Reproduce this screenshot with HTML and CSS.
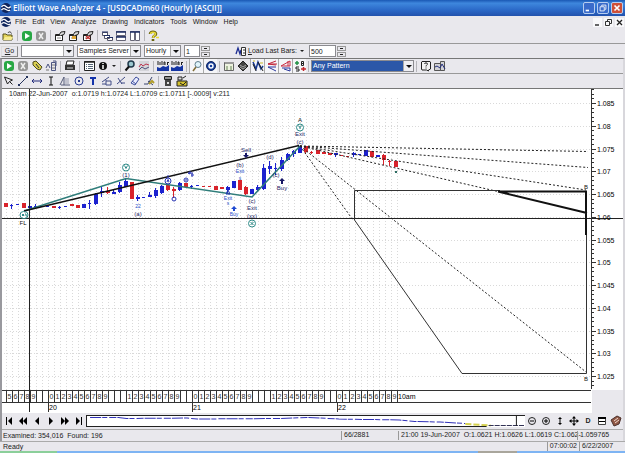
FILE: index.html
```html
<!DOCTYPE html>
<html lang="en">
<head>
<meta charset="utf-8">
<title>Elliott Wave Analyzer 4</title>
<link rel="stylesheet" href="styles.css">
</head>
<body>
<svg class="defs" aria-hidden="true">
  <symbol id="logo" viewBox="0 0 12 12"><circle cx="6" cy="6" r="5" fill="#10255c"/><path d="M1.5 5C3 3 4.500 3 6 4.500S9 6.500 10.800 4.500M1.500 8C3 6 4.500 6.500 6 7.500S9 9 10 8" stroke="#fff" stroke-width="1.300" fill="none"/></symbol>
  <symbol id="folder" viewBox="0 0 12 12"><path d="M1 10V4h3l1 1h5v5z" fill="#e4d45c" stroke="#55501c"/><path d="M6 3c1-2 3-1 3.500.5" stroke="#333" fill="none"/><path d="M3 7h8l-1.500 3H1z" fill="#f5eb91"/></symbol>
  <symbol id="go" viewBox="0 0 12 12"><rect x="1" y="1" width="10" height="10" rx="3" fill="#28a745"/><path d="M4 3l5 3-5 3z" fill="#fff"/></symbol>
  <symbol id="stop" viewBox="0 0 12 12"><rect x="1" y="1" width="10" height="10" rx="3" fill="#969696"/><path d="M4 3l4 6M8 3L4 9" stroke="#eee" stroke-width="1.500"/></symbol>
  <symbol id="prop" viewBox="0 0 12 12"><path d="M1.500 4.500h7v6h-7z" fill="#fff" stroke="#222"/><path d="M2 5h6" stroke="#222" stroke-width="2"/><path d="M5 5l2-3 4-.5-1 3-3 1" fill="#ddd" stroke="#222"/><path d="M3 8h4" stroke="#888"/></symbol>
  <symbol id="prop2" viewBox="0 0 12 12"><use href="#prop"/><path d="M4 6h4v3H4z" fill="#e0a83c"/></symbol>
  <symbol id="prop3" viewBox="0 0 12 12"><use href="#prop"/><path d="M4 6l4 3M8 6L4 9" stroke="#c33131" stroke-width="1.500"/></symbol>
  <symbol id="cascade" viewBox="0 0 12 12"><path d="M1.500 2.500h5v3h-5zM3.500 5.500h5v3h-5zM6.500 7.500h5v3h-5z" fill="#fff" stroke="#556"/><path d="M1 2h6M3 5.500h6M6 7.500h6" stroke="#1d2d63"/></symbol>
  <symbol id="tileh" viewBox="0 0 12 12"><path d="M1.500 1.500h9v4h-9zM1.500 6.500h9v4h-9z" fill="#fff" stroke="#667"/><path d="M1 2h10M1 7h10" stroke="#1d2d63" stroke-width="1.500"/></symbol>
  <symbol id="tilev" viewBox="0 0 12 12"><path d="M1.500 1.500h4v9h-4zM6.500 1.500h4v9h-4z" fill="#fff" stroke="#667"/><path d="M1 2h10" stroke="#1d2d63" stroke-width="1.500"/></symbol>
  <symbol id="help" viewBox="0 0 12 12"><path d="M2 4c0-3 6-3 6 0 0 2-3 1.500-3 4M5 9v2" stroke="#6a6410" stroke-width="2.600" fill="none"/><path d="M2.500 4c0-2.500 5-2.500 5 0 0 2-2.500 1.500-2.500 4M8 7.500h3" stroke="#eadb38" stroke-width="1.500" fill="none"/></symbol>
  <symbol id="tag" viewBox="0 0 12 12"><path d="M2 2l3-1 6 6-2 3-3-1-4-4z" fill="#d9cf52" stroke="#4e4a1b"/><path d="M5 4l3 4" stroke="#333"/></symbol>
  <symbol id="wavebox" viewBox="0 0 12 12"><path d="M1 8l2-4 2 4M6.500 2.500h4v8h-4zM8 1h3v5" fill="none" stroke="#4b5482"/><path d="M1 10h3M7 5h3M7 8h3" stroke="#777"/></symbol>
  <symbol id="print" viewBox="0 0 12 12"><path d="M3 1h7L9 5H2z" fill="#fff" stroke="#222"/><path d="M1 5h10v5H1z" fill="#333"/><path d="M3 8h6" stroke="#ddd"/></symbol>
  <symbol id="list" viewBox="0 0 12 12"><path d="M1.500 1.500h10v9h-10z" fill="#fff" stroke="#222"/><path d="M1 2h11" stroke="#222" stroke-width="1.500"/><path d="M3 4.500h1M3 6.500h1M3 8.500h1M5 4.500h5M5 6.500h5M5 8.500h5" stroke="#567"/></symbol>
  <symbol id="info" viewBox="0 0 12 12"><circle cx="6" cy="6" r="4" fill="#111"/><path d="M6 3v1M6 5v4" stroke="#fff" stroke-width="1.500"/></symbol>
  <symbol id="find" viewBox="0 0 12 12"><circle cx="7" cy="4" r="3" fill="#9bc7cf" stroke="#203a4c" stroke-width="1.500"/><path d="M5 6.500L1.500 10.500" stroke="#111" stroke-width="2"/></symbol>
  <symbol id="lens" viewBox="0 0 12 12"><circle cx="7" cy="4.500" r="3" fill="#dff3fa" stroke="#607d8d"/><path d="M5 7l-3 4" stroke="#806c36" stroke-width="1.500"/></symbol>
  <symbol id="osc" viewBox="0 0 12 12"><path d="M1 1h10v10H1z" fill="#d4d4d9"/><path d="M1 7l2-3 2 2 3-2 3 1" stroke="#bb3550" fill="none"/><path d="M1 10l3-3 3 2 4-2" stroke="#4d527a" fill="none"/></symbol>
  <symbol id="area" viewBox="0 0 12 12"><path d="M0 11V7l3 1 3-2 3 1 3-2v6z" fill="#1535a4"/><path d="M1 1v4M3 2v3M5 1v4M7 5V2h1v3M10.500 2v3M10 2.500h2" stroke="#222" fill="none"/></symbol>
  <symbol id="target" viewBox="0 0 12 12"><circle cx="6" cy="6" r="4.500" fill="#173d99" stroke="#132861"/><circle cx="6" cy="6" r="2" fill="#173d99" stroke="#fff" stroke-width="1.400"/></symbol>
  <symbol id="table" viewBox="0 0 12 12"><path d="M1.500 2.500h9v8h-9z" fill="#edf2df" stroke="#666"/><path d="M2 3h9" stroke="#999" stroke-width="2"/><path d="M3 7h2M7 7h2M3 9h2M7 9h2" stroke="#648257"/></symbol>
  <symbol id="stack" viewBox="0 0 12 12"><path d="M1 6l5-5 5 5-5 5z" fill="#444" stroke="#222"/><path d="M3 5l3 2 3-2M3 7l3 2 3-2" stroke="#a7a7a7" fill="none"/></symbol>
  <symbol id="waves" viewBox="0 0 12 12"><path d="M1 2l3 7 2-7 3 7 2-3" stroke="#17398f" stroke-width="1.500" fill="none"/><path d="M1 4l3 7M6 2l5 9" stroke="#222"/><path d="M1 1h2M8 3h3" stroke="#c9b82b"/></symbol>
  <symbol id="chan" viewBox="0 0 12 12"><path d="M10 1L2 4l8 1M2 4h9" stroke="#c2263b" fill="none"/><path d="M10 7H2l8 4" stroke="#28359c" fill="none"/></symbol>
  <symbol id="tri" viewBox="0 0 12 12"><path d="M10 1L1 6h9zM8 1v5" stroke="#c92b42" fill="none"/><path d="M2 8h8v3L4 9" stroke="#28359c" fill="none"/></symbol>
  <symbol id="bs" viewBox="0 0 12 12"><path d="M1 3h4M3 1v4" stroke="#219146" stroke-width="1.500"/><path d="M7.500 1.500h2v4h-2zM7 3.500h3M5 7H2v2h3v2H2" stroke="#222" fill="none"/><path d="M7 9h5M9.500 7v4" stroke="#c3262b" stroke-width="1.500"/></symbol>
  <symbol id="ask" viewBox="0 0 12 12"><path d="M2 1.500h8l.5.5v7l-2 1v1l-2-1H2L1.500 9V2z" fill="#f3f3f3" stroke="#222"/><path d="M4.500 4c0-1.500 3-1.500 3 0 0 1-1.500 1-1.500 2.500M6 7.500v1" stroke="#222" fill="none"/></symbol>
  <symbol id="exitbox" viewBox="0 0 12 12"><path d="M.5 3.500h6v7h-6zM6.500 1.500h4v9h-4z" fill="#d2d2d6" stroke="#555"/><path d="M1 7l2-1 3 2 2-4 3 5" stroke="#24307e" fill="none"/></symbol>
  <symbol id="pointer" viewBox="0 0 12 12"><path d="M1.500 2l8 3-3 1.500 3 3M1.500 2l3 7 2-2.500" fill="none" stroke="#222"/></symbol>
  <symbol id="line" viewBox="0 0 12 12"><path d="M2 10l8-8" stroke="#25335c"/><path d="M1 9h2v2H1zM9 1h2v2H9z" fill="#25335c"/></symbol>
  <symbol id="hline" viewBox="0 0 12 12"><path d="M1 6h10" stroke="#222b7b"/><path d="M3 4L1 6l2 2M9 4l2 2-2 2" stroke="#222b7b" fill="none"/></symbol>
  <symbol id="vline" viewBox="0 0 12 12"><path d="M6 2v8M4 2h4M4 10h4" stroke="#111"/></symbol>
  <symbol id="fib" viewBox="0 0 12 12"><path d="M1 10L5 2v8M2 10h9" stroke="#555b78" fill="none"/><path d="M6 4h4M6 6h4M6 8h4" stroke="#9a9db0"/></symbol>
  <symbol id="circ" viewBox="0 0 12 12"><circle cx="6" cy="6" r="4" fill="none" stroke="#273a91"/><path d="M5 6h2" stroke="#273a91" stroke-width="2"/></symbol>
  <symbol id="tee" viewBox="0 0 12 12"><path d="M3 3h6M6 3v7" stroke="#1434aa" stroke-width="2"/></symbol>
  <symbol id="fork" viewBox="0 0 12 12"><path d="M1 7l7-5M5 5v5h5V6H5M1 9h4" stroke="#414c86" fill="none"/></symbol>
  <symbol id="cross" viewBox="0 0 12 12"><path d="M2 9l8-7M3 3l4 6M6 8h4" stroke="#414c86" fill="none"/></symbol>
  <symbol id="eraser" viewBox="0 0 12 12"><path d="M2 8l5-6 3 2-4 6zM3 6l4 3" fill="#e9ecff" stroke="#3c4d9c"/></symbol>
  <symbol id="angle" viewBox="0 0 12 12"><path d="M1 9h4l4-7M5 6l5 4" stroke="#39446e" fill="none"/><path d="M6 9l3-3 2 2" stroke="#b19e2c" stroke-width="2" fill="none"/></symbol>
  <symbol id="trash" viewBox="0 0 12 12"><path d="M2.500 1.500h7v3h-7z" fill="#fff" stroke="#222"/><path d="M3 3h6" stroke="#222"/><path d="M3 5h6v6H3z" fill="#444"/><path d="M5 7h2v2H5z" fill="#ddd"/></symbol>
  <symbol id="colors" viewBox="0 0 12 12"><path d="M1 6h10v5H1z" fill="#d3c02d" stroke="#222"/><path d="M2 2h4v3H2zM7 3l3-2" stroke="#222" fill="#ddd"/><path d="M4 8l3 2 3-3" stroke="#222" fill="none"/></symbol>
  <symbol id="loadbars" viewBox="0 0 12 12"><path d="M1 9l2-6 2 6 1-4" stroke="#1b2b91" stroke-width="1.300" fill="none"/><path d="M6.500 2.500h4v8h-4z" fill="#fff" stroke="#333"/><path d="M8 5h2M8 8h2" stroke="#333"/></symbol>
</svg>

<header class="titlebar">
  <svg class="icon"><use href="#logo"/></svg>
  <h1>Elliott Wave Analyzer 4 - [USDCADm60 (Hourly) [ASCII]]</h1>
  <div class="winbtns">
    <button aria-label="Minimize"><svg viewBox="0 0 12 12"><path d="M2 8h4v2H2z" fill="#fff"/></svg></button>
    <button aria-label="Restore"><svg viewBox="0 0 12 12"><path d="M4.500 4V2.500h5v5H8M2.500 4.500h5v5h-5z" fill="none" stroke="#fff"/></svg></button>
    <button class="close" aria-label="Close"><svg viewBox="0 0 12 12"><path d="M3 3l6 6M9 3L3 9" stroke="#fff" stroke-width="2"/></svg></button>
  </div>
</header>

<nav class="menubar">
  <svg class="icon"><use href="#logo"/></svg>
  <button>File</button><button>Edit</button><button>View</button><button>Analyze</button><button>Drawing</button><button>Indicators</button><button>Tools</button><button>Window</button><button>Help</button>
  <div class="mdibtns">
    <button aria-label="Minimize chart"><svg viewBox="0 0 9 9"><path d="M2 7h4" stroke="#333" stroke-width="1.500"/></svg></button>
    <button aria-label="Restore chart"><svg viewBox="0 0 9 9"><path d="M3.500 3V1.500h4v4H6M1.500 3.500h4v4h-4z" fill="none" stroke="#333"/></svg></button>
    <button aria-label="Close chart"><svg viewBox="0 0 9 9"><path d="M2 2l5 5M7 2L2 7" stroke="#222" stroke-width="1.300"/></svg></button>
  </div>
</nav>

<div class="toolbar">
  <button aria-label="Open"><svg><use href="#folder"/></svg></button><i class="sep"></i>
  <button aria-label="Start"><svg><use href="#go"/></svg></button>
  <button aria-label="Stop"><svg><use href="#stop"/></svg></button><i class="sep"></i>
  <button aria-label="Properties"><svg><use href="#prop"/></svg></button>
  <button aria-label="Edit properties"><svg><use href="#prop2"/></svg></button>
  <button aria-label="Remove properties"><svg><use href="#prop3"/></svg></button><i class="sep"></i>
  <button aria-label="Cascade"><svg><use href="#cascade"/></svg></button>
  <button aria-label="Tile horizontally"><svg><use href="#tileh"/></svg></button>
  <button aria-label="Tile vertically"><svg><use href="#tilev"/></svg></button><i class="sep"></i>
  <button aria-label="Help"><svg><use href="#help"/></svg></button>
</div>

<div class="toolbar fields">
  <button class="gobtn"><u>G</u>o</button>
  <span class="combo w-symbol"><select aria-label="Symbol"><option></option></select></span>
  <span class="combo w-server"><select aria-label="Server"><option>Samples Server</option></select></span>
  <span class="combo w-period"><select aria-label="Period"><option>Hourly</option></select></span>
  <span class="spin"><input class="w-count" aria-label="Count" value="1"><span class="steps"><button aria-label="More"></button><button aria-label="Less"></button></span></span>
  <span class="load"><svg class="icon"><use href="#loadbars"/></svg><label for="bars"><u>L</u>oad Last Bars:</label><i class="caret"></i></span>
  <span class="spin"><input class="w-bars" id="bars" value="500"><span class="steps"><button aria-label="More bars"></button><button aria-label="Fewer bars"></button></span></span>
</div>

<main class="docwin">
  <div class="toolbar ruled">
    <button aria-label="Run"><svg><use href="#go"/></svg></button>
    <button aria-label="Halt"><svg><use href="#stop"/></svg></button>
    <button aria-label="Label"><svg><use href="#tag"/></svg></button>
    <button aria-label="Wave settings"><svg><use href="#wavebox"/></svg></button><i class="sep"></i>
    <button aria-label="Print"><svg><use href="#print"/></svg></button><i class="sep"></i>
    <button aria-label="List"><svg><use href="#list"/></svg></button>
    <button aria-label="Info"><svg><use href="#info"/></svg></button><i class="caret"></i><i class="sep"></i>
    <button aria-label="Find"><svg><use href="#find"/></svg></button>
    <button aria-label="Oscillator"><svg><use href="#osc"/></svg></button><i class="sep"></i>
    <button aria-label="Wave area"><svg><use href="#area"/></svg></button>
    <button aria-label="Wave area 2"><svg><use href="#area"/></svg></button><i class="sep"></i>
    <button class="on" aria-label="Zoom"><svg><use href="#lens"/></svg></button>
    <button class="on" aria-label="Target"><svg><use href="#target"/></svg></button><i class="sep"></i>
    <button aria-label="Table"><svg><use href="#table"/></svg></button>
    <button aria-label="Layers"><svg><use href="#stack"/></svg></button>
    <button class="on" aria-label="Waves"><svg><use href="#waves"/></svg></button>
    <button class="on" aria-label="Channels"><svg><use href="#chan"/></svg></button>
    <button class="on" aria-label="Wedges"><svg><use href="#tri"/></svg></button>
    <button class="on" aria-label="Buy and sell"><svg><use href="#bs"/></svg></button><i class="sep"></i>
    <span class="combo w-pattern"><select aria-label="Pattern"><option>Any Pattern</option></select></span><i class="sep"></i>
    <button aria-label="Ask"><svg><use href="#ask"/></svg></button>
    <button aria-label="Chart exit"><svg><use href="#exitbox"/></svg></button>
  </div>
  <div class="toolbar">
    <button aria-label="Pointer"><svg><use href="#pointer"/></svg></button>
    <button aria-label="Line"><svg><use href="#line"/></svg></button>
    <button aria-label="Horizontal line"><svg><use href="#hline"/></svg></button>
    <button aria-label="Vertical line"><svg><use href="#vline"/></svg></button>
    <button aria-label="Fibonacci"><svg><use href="#fib"/></svg></button>
    <button aria-label="Circle"><svg><use href="#circ"/></svg></button>
    <button aria-label="Text"><svg><use href="#tee"/></svg></button>
    <button aria-label="Fork"><svg><use href="#fork"/></svg></button>
    <button aria-label="Cross"><svg><use href="#cross"/></svg></button>
    <button aria-label="Eraser"><svg><use href="#eraser"/></svg></button>
    <button aria-label="Angle"><svg><use href="#angle"/></svg></button><i class="sep"></i>
    <button aria-label="Delete drawings"><svg><use href="#trash"/></svg></button>
    <button aria-label="Colors"><svg><use href="#colors"/></svg></button>
  </div>

  <svg class="chart" viewBox="2 89 621 324" role="img" aria-label="USDCADm60 hourly price chart">
    <rect x="2" y="89" width="621" height="324" fill="#fff"/>
    <rect x="592" y="390" width="31" height="23" fill="#e9e8ed"/>
    <g id="grid" class="grid"></g>
    <g id="candles"></g>
    <path class="axis" d="M2 390.500H591M2 402.500H591"/>
    <path class="cross" d="M29.500 89V412M2 218H623"/>
    <path class="teal" d="M24 211L126 178.500L252 197L300 146"/>
    <path class="trend" d="M24 211L299 145.500"/>
    <g class="fan">
      <path d="M300 146L588 151.500M300 146L588 167.500M300 146L586 190M300 146L500 192M300 146L353 220M300 146L586 372"/>
    </g>
    <path class="zone" d="M500 190.500H354.500V220L462 373.500H586.500V191"/>
    <path class="heavy" d="M498 191.500H586V235M498 191.500L587 213"/>
    <g id="scale"></g>
    <g id="hours"></g>
    <text class="read" x="9" y="96" xml:space="preserve">10am 22-Jun-2007  o:1.0719 h:1.0724 L:1.0709 c:1.0711 [-.0009] v:211</text>
    <g class="lbl">
      <text class="k" x="300" y="122">A</text><text class="n" x="300" y="136">Exit</text><text class="n" x="300" y="144">(c)</text>
      <text class="n" x="246" y="152">Sell</text><text class="n" x="240" y="167">(b)</text><text class="b s" x="240" y="173">Exit</text><text class="b s" x="240" y="180">s</text>
      <text class="n" x="270" y="159">(d)</text><text class="n" x="276" y="177">(c)</text><text class="n" x="282" y="190">Buy</text>
      <text class="n" x="126" y="177">(1)</text><text class="b s" x="138" y="208">22</text><text class="n" x="138" y="216">(a)</text>
      <text class="b s" x="228" y="200">Exit</text><text class="b s" x="228" y="205">s</text><text class="b s" x="234" y="216">Buy</text>
      <text class="n" x="252" y="203">(c)</text><text class="n" x="252" y="210">Exit</text><text class="n" x="252" y="218">(xx)</text>
      <text class="k" x="23" y="225">FL</text><text class="k" x="586" y="189">B</text><text class="k" x="586" y="381">B</text>
    </g>
    <g class="ring">
      <circle cx="300" cy="127.500" r="3.500"/><path d="M298.500 125.500l1.500 2 1.500-2M300 127v2"/>
      <circle cx="126" cy="167.500" r="3.500"/><path d="M124.500 165.500l1.500 3 1.500-3"/>
      <circle cx="252" cy="223.500" r="3.500"/><path d="M250.500 222l3 3M253.500 222l-3 3"/>
      <rect x="20" y="211.500" width="8" height="7" rx="3.500"/><path d="M22 214l2 2M24 214l-2 2M25 214h1v2h1"/>
    </g>
    <g class="bring"><circle cx="168" cy="181" r="3"/><path d="M167 182l1-2.500 1 2.500"/><circle cx="186" cy="180" r="2"/><path d="M185 180h2"/><circle cx="174" cy="199" r="2"/><path d="M168 178v-3M190 171v3l-2-1h5M192 173v4M191 175h3M228 190l-2 4h4z"/></g>
    <path d="M246 158l-3-3h2v-2h2v2h2zM282 178l-3 3h2v3h2v-3h2z" fill="#171764"/>
    <path d="M234 206l-3 3h2v2h2v-2h2z" fill="#1e49d3"/>
    <rect x="395" y="171" width="2" height="2" fill="#2d6d63"/>
  </svg>

  <div class="player">
    <button aria-label="First"><svg viewBox="0 0 12 12"><path d="M3 2h1v8H3zM9 2v8L5 6z"/></svg></button>
    <button aria-label="Fast back"><svg viewBox="0 0 12 12"><path d="M6 2v8L2 6zM10 2v8L6 6z"/></svg></button>
    <button aria-label="Back"><svg viewBox="0 0 12 12"><path d="M8 2v8L4 6z"/></svg></button>
    <button aria-label="Forward"><svg viewBox="0 0 12 12"><path d="M4 2v8l4-4z"/></svg></button>
    <button aria-label="Fast forward"><svg viewBox="0 0 12 12"><path d="M2 2v8l4-4zM6 2v8l4-4z"/></svg></button>
    <button aria-label="Last"><svg viewBox="0 0 12 12"><path d="M8 2h1v8H8zM3 2v8l4-4z"/></svg></button>
    <svg class="overview" viewBox="0 0 434 12" preserveAspectRatio="none" role="img" aria-label="Price overview">
      <rect width="434" height="12" fill="#fff"/>
      <path d="M4 2.500H32L40 3.500L100 3L110 4L190 3.500L220 2.500L250 4L310 5L325 6.500L350 7L375 8.500" fill="none" stroke="#3131b8" stroke-dasharray="11 1 5 2 7 1"/>
      <path d="M375 9L400 10.500" stroke="#d5d14f" stroke-width="2" stroke-dasharray="6 2"/><path d="M398 10.500H434" stroke="#335" stroke-dasharray="5 1"/>
      <path d="M.5 12V.5H434M0 11.500H396" fill="none" stroke="#222"/><path d="M425.500 0V11" stroke="#222"/>
    </svg>
    <div class="zoomers">
    <button aria-label="Zoom out"><svg viewBox="0 0 12 12"><circle cx="6" cy="6" r="3.500" fill="none" stroke="#222"/><path d="M4 5.500h4v1H4z"/></svg></button>
    <button aria-label="Zoom in"><svg viewBox="0 0 12 12"><circle cx="6" cy="6" r="3.500" fill="none" stroke="#222"/><path d="M4 5.500h4v1H4zM5.500 4h1v4h-1z"/></svg></button>
    <button aria-label="Fit height"><svg viewBox="0 0 12 12"><path d="M6 2l2 2H6.500v4H8l-2 2-2-2h1.500V4H4z"/></svg></button>
    <button aria-label="Move"><svg viewBox="0 0 12 12"><path d="M6 1l2 2.500H6.500v2H8.500V4L11 6 8.500 8V6.500H6.500v2H8L6 11 4 8.500h1.500v-2H3.500V8L1 6l2.500-2v1.500h2v-2H4z"/></svg></button>
    <button aria-label="Daily">D</button>
    <button aria-label="Calendar"><svg viewBox="0 0 12 12"><path d="M2.500 2.500h7v7h-7z" fill="#fff" stroke="#444"/><path d="M2 2h8v2H2zM3 6h6v1H3z"/></svg></button>
    <button aria-label="Notes"><svg viewBox="0 0 12 12"><path d="M1 5l6-4 4 2-2 6-5 2z" fill="#8f5745" stroke="#4b302b"/><path d="M4 6l4-3M5 8l4-3" stroke="#f1d9cd"/></svg></button>
    </div>
  </div>

  <div class="status">
    <span class="grow">Examined: 354,016&nbsp; Found: 196</span>
    <span class="pane w-pos">66/2881</span>
    <span class="pane w-ohlc">21:00 19-Jun-2007&nbsp; O:1.0621 H:1.0626 L:1.0619 C:1.062-</span>
    <span class="pane w-price">1.059765</span>
  </div>
</main>

<footer class="status app">
  <span class="grow">Ready</span>
  <span class="pane">07:00:02</span>
  <span class="pane w-date">6/22/2007</span>
</footer>
<div class="desk"><i></i></div>
<script src="chart.js"></script>
</body>
</html>
```
FILE: styles.css
```css
* { box-sizing: border-box; }

body {
  margin: 0;
  background: #e9e8ed;
  color: #222;
  font-family: "Liberation Sans", Arial, sans-serif;
  font-size: 7px;
  line-height: 8px;
}

button, input, select {
  margin: 0;
  padding: 0;
  border: 0;
  border-radius: 0;
  background: none;
  color: inherit;
  font: inherit;
}

.defs { position: absolute; width: 0; height: 0; }
.icon { width: 12px; height: 12px; flex: none; }

.titlebar {
  display: flex;
  align-items: center;
  height: 16px;
  padding: 0 2px 0 0;
  background: linear-gradient(#1a58b4, #3e87dd 20%, #2c6bc9 60%, #2252ad);
}
.titlebar h1 {
  margin: 0 0 0 1px;
  color: #fff;
  font: 600 8px/12px "Open Sans", sans-serif;
  white-space: nowrap;
}
.winbtns { display: flex; gap: 2px; margin-left: auto; }
.winbtns button {
  width: 12px;
  height: 12px;
  border: 1px solid #b6cdf0;
  border-radius: 2px;
  background: #3a6ccb;
}
.winbtns .close { background: #cf5038; }
.winbtns svg, .mdibtns svg { display: block; width: 100%; height: 100%; }

.menubar { display: flex; align-items: center; height: 12px; padding-right: 1px; }
.menubar > button { margin-left: 3px; margin-right: 3px; }
.mdibtns { display: flex; gap: 2px; margin-left: auto; }
.mdibtns button { width: 9px; height: 9px; background: #f8f8fa; }

.toolbar { display: flex; align-items: center; height: 15px; padding-left: 1px; }
.toolbar > button { flex: none; width: 14px; height: 14px; padding: 1px; }
.toolbar > button svg { display: block; width: 12px; height: 12px; }
.toolbar > .on { border: solid #aaa; border-width: 0 0 0 1px; background: #f5f5f8; }
.sep { flex: none; width: 1px; height: 11px; margin: 0 2px; background: #b5b5ba; }
.caret { flex: none; width: 4px; height: 2px; margin: 0 2px; background: #222; clip-path: polygon(0 0, 100% 0, 50% 100%); }
.ruled { border-bottom: 1px solid #999; }

.fields { gap: 3px; border-top: 1px solid #999; }
.toolbar > .gobtn { width: 17px; height: 11px; padding: 0; border: 1px solid #888; border-top-color: #ddd; border-left-color: #ddd; }
.combo {
  position: relative;
  display: block;
  flex: none;
  height: 12px;
  border: 1px solid #8b8b90;
  background: #fff;
}
.combo select { display: block; width: 100%; height: 10px; padding: 0 9px 0 1px; appearance: none; outline: 0; }
.combo::after {
  content: "";
  position: absolute;
  top: 0;
  right: 0;
  width: 9px;
  height: 10px;
  border-left: 1px solid #aaa;
  background: #eeeef2;
  pointer-events: none;
}
.combo::before {
  content: "";
  position: absolute;
  z-index: 1;
  top: 4px;
  right: 1px;
  border: 3px solid transparent;
  border-top-color: #111;
  border-bottom: 0;
  pointer-events: none;
}
.w-symbol { width: 53px; }
.w-server { width: 64px; }
.w-period { width: 37px; }
.w-pattern { width: 103px; }
.w-pattern select { background: #2b57a8; color: #fff; }

.spin { display: flex; align-items: center; }
.spin input { height: 12px; padding: 0 1px; border: 1px solid #8b8b90; background: #fff; }
.w-count { width: 16px; }
.w-bars { width: 27px; }
.steps { display: grid; gap: 1px; margin-left: 1px; }
.steps button { width: 9px; height: 5px; border: 1px solid #999; background: linear-gradient(#222, #222) center / 3px 1px no-repeat; }
.load { display: flex; align-items: center; gap: 1px; margin-left: 22px; }

.docwin { border-left: 2px solid #99999e; border-right: 2px solid #d8d7dc; border-top: 1px solid #777; }
.docwin > .toolbar { padding-left: 0; }
.docwin > .toolbar:not(.ruled) { border-bottom: 1px solid #777; }

.chart { display: block; width: 100%; height: auto; font-size: 7px; }
.grid { fill: none; stroke: #d9d9d9; stroke-dasharray: 1 2; shape-rendering: crispEdges; }
.axis { fill: none; stroke: #333; shape-rendering: crispEdges; }
.cross { fill: none; stroke: #222; shape-rendering: crispEdges; }
.teal { fill: none; stroke: #2f7d7a; stroke-width: 1.5; }
.trend { fill: none; stroke: #111; stroke-width: 1.5; }
.fan { fill: none; stroke: #222; stroke-dasharray: 2 2; }
.zone { fill: none; stroke: #333; }
.heavy { fill: none; stroke: #111; stroke-width: 2; }
.up { fill: #1c22cf; }
.down { fill: #d8232b; }
.read { fill: #222; }
.lbl { text-anchor: middle; font-size: 6px; }
.k { fill: #111; }
.n { fill: #1d1d66; }
.b { fill: #2a50c8; }
.s { font-size: 5px; }
.ring { fill: none; stroke: #2f8b88; }
.bring { fill: none; stroke: #2835b5; }
.hour { text-anchor: middle; font-size: 7px; fill: #333; }

.player { display: flex; align-items: center; height: 16px; }
.player button { flex: none; width: 14px; height: 14px; padding: 1px; font-weight: bold; }
.player button svg { display: block; width: 12px; height: 12px; }
.overview { flex: 1; min-width: 0; height: 12px; }
.zoomers { display: flex; }

.status { display: flex; align-items: center; height: 12px; border-top: 1px solid #aaa; white-space: nowrap; }
.grow { flex: 1; padding-left: 1px; }
.pane { flex: none; height: 9px; padding-left: 2px; border-left: 1px solid #999; }
.w-pos { width: 57px; }
.w-ohlc { width: 179px; }
.w-price { width: 46px; }
.app { height: 10px; padding-left: 2px; }
.app .pane { padding-right: 2px; }
.w-date { width: 46px; }
.desk { display: flex; height: 2px; background: linear-gradient(90deg, #8bcf9a 57px, #7eb4f3 57px); }
.desk i { width: 39px; margin-left: auto; margin-right: 108px; background: #a9a69c; }
```
FILE: chart.js
```js
const NS = "http://www.w3.org/2000/svg";
const add = (id, tag, attrs, text) => {
  const el = document.createElementNS(NS, tag);
  for (const k in attrs) el.setAttribute(k, attrs[k]);
  if (text !== undefined) el.textContent = text;
  document.getElementById(id).appendChild(el);
};

// Price scale: one step is 0.005
const top0 = 103, step = 22.75;
for (let i = 0; i < 13; i++) {
  const y = Math.round(top0 + i * step) + 0.5;
  add("grid", "path", { d: `M4 ${y}H590` });
  add("scale", "path", { class: "axis", d: `M592 ${y}h4` });
  add("scale", "text", { x: 597, y: y + 2.5 }, String(+(1.085 - i * 0.005).toFixed(3)));
}
for (let i = -3; i < 63; i++) {
  const y = Math.round(top0 + i * step / 5) + 0.5;
  if (y < 388) add("scale", "path", { class: "axis", d: `M592 ${y}h2` });
}
add("scale", "path", { class: "axis", d: "M591.5 89V389" });

// Hour cells; the day starts at cell 0
const labels = [..."0123456789", "", "", "", ..."123456789", "", ""];
for (let i = -7; i <= 58; i++) {
  const x = Math.round(48 + i * 6.01);
  add("grid", "path", { d: `M${x + 0.5} 98V390` });
  add("hours", "path", { class: "axis", d: `M${x + 0.5} 390V402` });
  if (i === 58) break;
  const t = i < 0 ? ["5", "6", "7", "8", "9", "", ""][i + 7] : labels[i % 24];
  if (t) add("hours", "text", { class: "hour", x: x + 3.5, y: 399 }, t);
}
add("hours", "text", { x: 398, y: 399 }, "10am");
[["20", 48], ["21", 192], ["22", 337]].forEach(([t, x]) => {
  add("hours", "path", { class: "axis", d: `M${x + 0.5} 402V412` });
  add("hours", "text", { x: x + 1, y: 410 }, t);
});

// [direction, body top, body bottom, wick top, wick bottom], one per hour
const bars = [
  ["d",203,207],["u",205,206,204,209],["u",204,205],["d",203,208],["u",206,208],["u",206,207,204,209],["u",206,207],["u",206,207],
  ["d",206,208],["u",207,208,206,209],["u",206,207],["d",204,206],["d",205,208],["u",204,208],["u",203,204,200,209],["u",194,204,193,205],
  ["u",191,193,187,197],["d",191,193,187,194],["u",192,194,189,194],["u",185,192,182,193],["u",181,187,179,187],["d",182,199],["u",197,199,195,201],["u",197,198],
  ["u",195,197,192,197],["u",190,196,188,198],["u",186,193,185,194],["d",185,190,184,191],["d",189,191,187,198],["u",183,190,182,191],["d",183,187],["u",186,187,185,189],
  ["u",185,186],["d",186,187],["d",186,187],["d",186,190],["d",187,189],["u",187,190,186,194],["u",181,188],["d",180,190],
  ["d",187,194,186,195],["u",189,194],["u",187,190,185,191],["u",168,189,164,190],["u",166,169,161,174],["u",168,169,163,175],["u",160,169,157,171],["u",154,160,153,161],
  ["u",151,154,150,157],["u",146,153],["d",146,152,146,154],["d",152,153,151,154],["d",150,154],["d",152,154],["d",153,155],["u",153,155,153,157],
  ["d",155,156],["d",156,157],["u",153,155,152,157],["u",154,155],["u",150,156],["d",151,157],["u",155,157],["d",155,160,154,165],
  ["d",161,162,160,166],["d",161,167]
];
bars.forEach(([dir, a, b, w, v], i) => {
  const x = Math.round(6 + i * 6);
  const cls = dir === "u" ? "up" : "down";
  add("candles", "rect", { class: cls, x: x - 2, y: a, width: b - a < 2 ? 3 : 4, height: b - a });
  if (w) add("candles", "rect", { class: cls, x: x - 1, y: w, width: 1, height: v - w });
});
```
